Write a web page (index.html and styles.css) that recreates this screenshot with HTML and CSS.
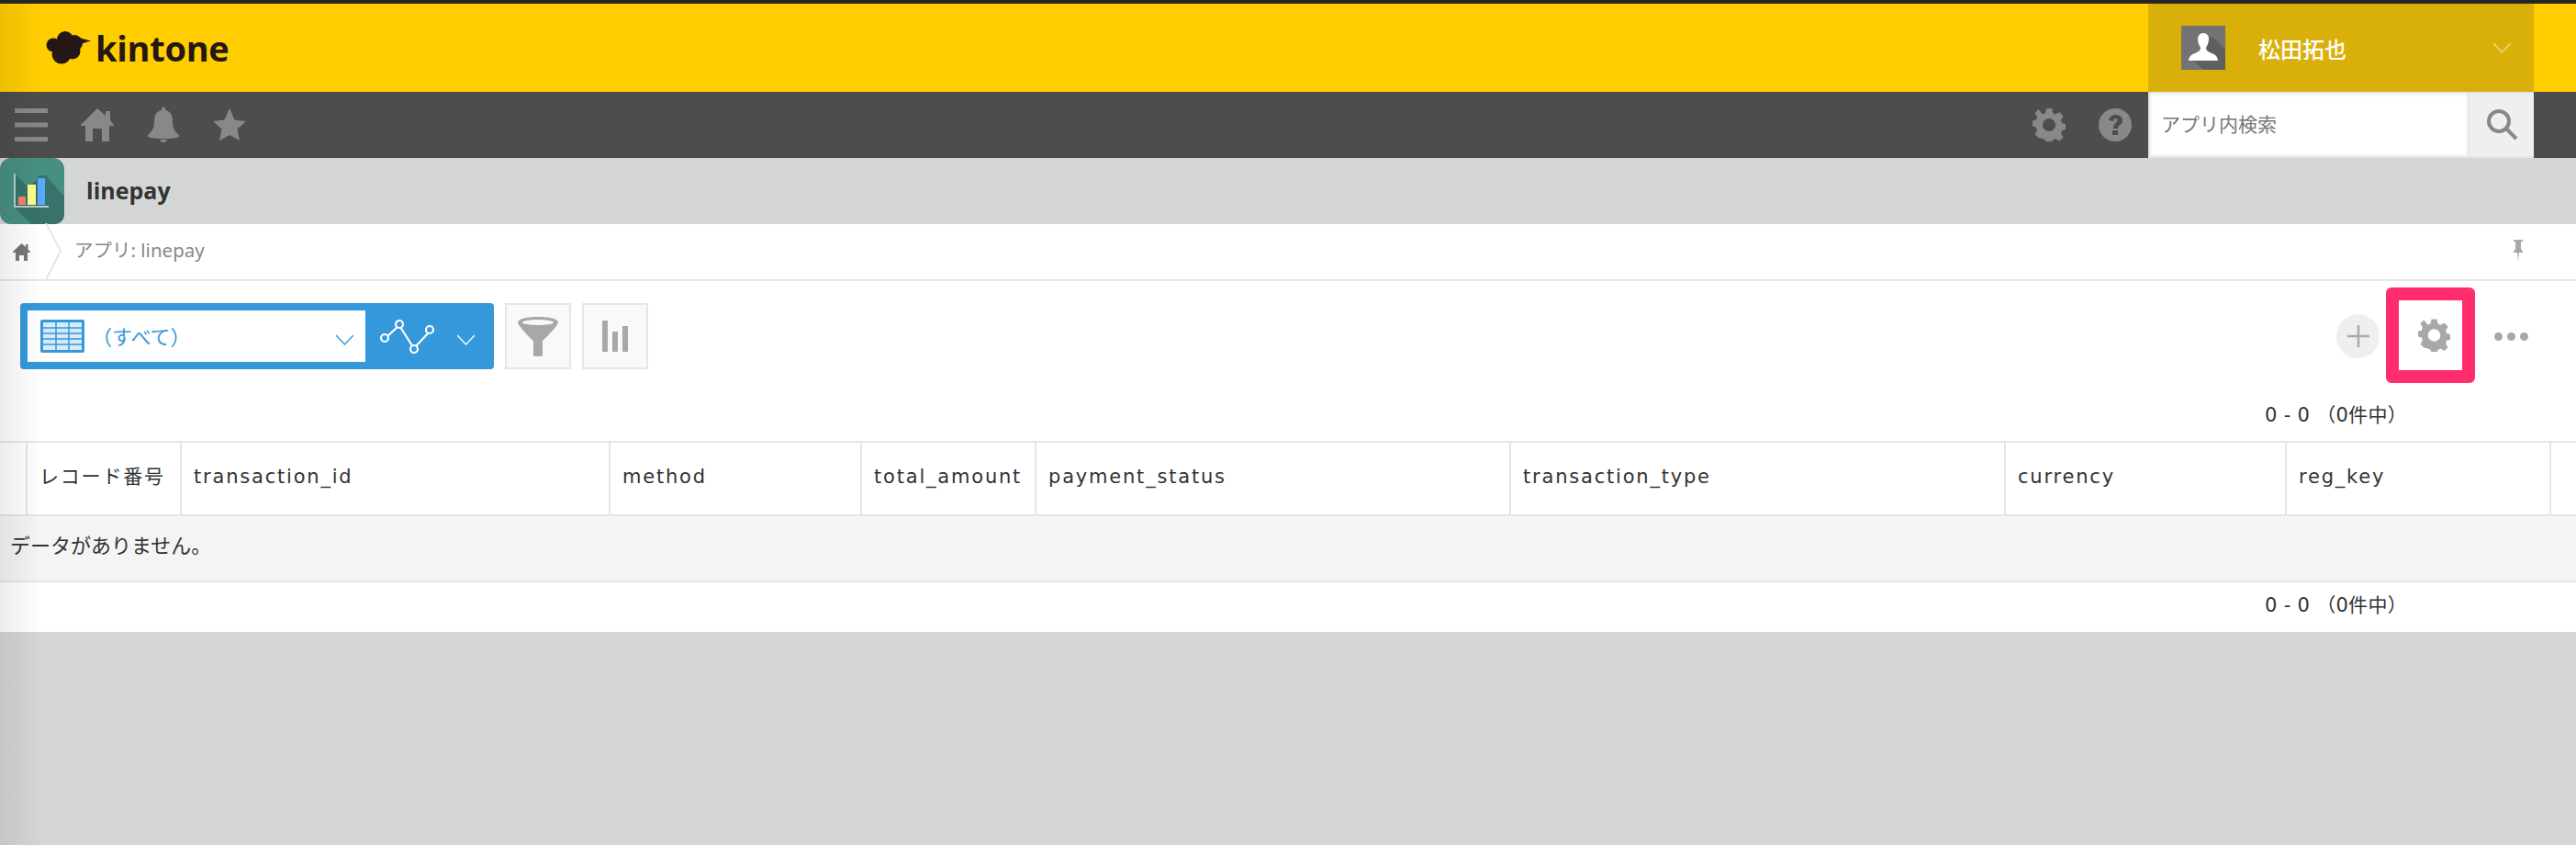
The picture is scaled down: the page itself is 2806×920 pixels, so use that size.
FILE: index.html
```html
<!DOCTYPE html>
<html lang="ja">
<head>
<meta charset="utf-8">
<title>linepay</title>
<link rel="stylesheet" href="styles.css">
</head>
<body>
<div class="page">
  <header class="topbar">
    <div class="logo">
      <svg class="logo-cloud" viewBox="0 0 50 36"><circle cx="8" cy="15" r="7.500"/><circle cx="21" cy="9" r="9"/><circle cx="31" cy="13" r="9"/><circle cx="29" cy="22" r="8.500"/><circle cx="17" cy="25" r="10.500"/><path d="M32 6l17 4.500L34 15z"/></svg>
      <span class="logo-text">kintone</span>
    </div>
    <div class="user">
      <svg class="avatar" viewBox="0 0 48 48"><rect width="48" height="48" fill="#737373"/><path d="M14 38l10 10h24V26L33 11z" fill="#5f5f5f"/><path d="M24 8c4 0 6 3 6 7 0 4-2 7-3 9 0 3 2 4 6 6 3 1 6 2 7 8H8c1-6 4-7 7-8 4-2 6-3 6-6-1-2-3-5-3-9 0-4 2-7 6-7z" fill="#fff"/></svg>
      <span class="user-name">松田拓也</span>
      <svg class="chev chev-user" viewBox="0 0 19 12"><path d="M0 1l9.500 10L19 1"/></svg>
    </div>
  </header>
  <nav class="navbar">
    <div class="nav-left">
      <svg class="nav-icon burger" viewBox="0 0 36 36"><path d="M0 0h36v5H0zM0 15.500h36v5H0zM0 31h36v5H0z"/></svg>
      <svg class="nav-icon home" viewBox="0 0 36 36"><path d="M18 0l9 8V3h5v10l4 5v1h-5v17H23V22H13v14H5V19H0v-1z"/></svg>
      <svg class="nav-icon bell" viewBox="0 0 34 38"><path d="M15 0h4v3c6 1 8 6 8 12 0 7 2 11 7 15v2c-5 2-11 2-17 2S5 34 0 32v-2c5-4 7-8 7-15C7 9 9 4 15 3zM13 35h8c-1 2-2 3-4 3s-3-1-4-3z"/></svg>
      <svg class="nav-icon star" viewBox="0 0 36 36"><path d="M18 0l5.500 12.500L36 14l-9.500 8.500L29 35l-11-6-11 6 2.500-12.500L0 14l12.500-1.500z"/></svg>
    </div>
    <div class="nav-right">
      <svg class="nav-icon gear-nav" viewBox="0 0 36 36"><path fill-rule="evenodd" d="M15 0h6l1 5 3 1.500L29.500 4l4 4.500-2.500 4 1 3.500 4 1v6l-4 1-1 3.500 2.500 4-4 4-4.500-2.500-3 1.500-1 5h-6l-1-5-3-1.500L6.500 32l-4-4 2.500-4L4 20.500 0 19.500v-6l4-1 1-3.500-2.500-4 4-4L11 6.500l3-1.500zM18 11a7 7 0 100 14 7 7 0 000-14z"/></svg>
      <svg class="nav-icon help" viewBox="0 0 36 36"><circle cx="18" cy="18" r="18"/><path fill="#4d4d4d" d="M11 13c1-4 4-6 7-6 4 0 8 2 8 6 0 3-2 5-4 6-1 .8-1 2-1 3h-5c0-3 .5-4 2.500-6 1-1 2-1.500 2-3 0-1-.5-2-2-2s-2 1-2.500 3zM15 24h6v5h-6z"/></svg>
      <div class="search">
        <div class="search-input">アプリ内検索</div>
        <div class="search-btn">
          <svg class="search-icon" viewBox="0 0 35 34"><circle cx="14" cy="13" r="11"/><path d="M22 21l11 11"/></svg>
        </div>
      </div>
    </div>
  </nav>
  <div class="appbar">
    <svg class="app-icon" viewBox="0 0 70 72">
      <rect width="70" height="72" rx="12" fill="#478f80"/>
      <path d="M16 17l14 14 9-6 3-6h8l20 23v20a10 10 0 01-10 10H34L16 54z" fill="#37736a"/>
      <rect x="20" y="42" width="8" height="9" fill="#fb7f68"/>
      <rect x="30" y="29" width="9" height="22" fill="#fbfd8b"/>
      <rect x="41" y="22" width="8" height="29" fill="#5aa9fa"/>
      <path d="M16 17v36h37" fill="none" stroke="#dfe9e7" stroke-width="1.500"/>
    </svg>
    <div class="app-title">linepay</div>
  </div>
  <div class="breadcrumb">
    <div class="crumb-home">
      <svg class="crumb-home-icon" viewBox="0 0 19 19"><path d="M9.500 0l4.500 4V1h2.500v5.500L19 9v1h-3v9h-4v-6H7v6H3v-9H0V9z"/></svg>
      <svg class="crumb-arrow" viewBox="0 0 20 62"><path d="M2 0l16 30L2 62"/></svg>
    </div>
    <div class="crumb-text">アプリ: linepay</div>
    <svg class="pin" viewBox="0 0 12 24"><path d="M1 0h10v2H9v8l2 3v1H7l-1 10-1-10H1v-1l2-3V2H1z"/></svg>
  </div>
  <div class="content">
    <div class="toolbar">
      <div class="view-box">
        <div class="view-select">
          <svg class="table-icon" viewBox="0 0 48 36">
            <rect width="48" height="36" rx="2" fill="#3498db"/>
            <path d="M3 3h42v30H3z" fill="#d6eaf8"/>
            <path d="M3 9h42M3 15h42M3 21h42M3 27h42M17 3v30M31 3v30" stroke="#3498db" stroke-width="1.500" fill="none"/>
          </svg>
          <span class="view-name">（すべて）</span>
          <svg class="chev chev-blue" viewBox="0 0 19 12"><path d="M0 1l9.500 10L19 1"/></svg>
        </div>
        <svg class="graph-icon" viewBox="0 0 60 37"><path d="M6 20L21 6M22 8l14 22M38 30L54 13"/><circle cx="5" cy="20" r="4"/><circle cx="21" cy="5" r="4"/><circle cx="37" cy="32" r="4"/><circle cx="54" cy="11" r="4"/></svg>
        <svg class="chev chev-white" viewBox="0 0 19 12"><path d="M0 1l9.500 10L19 1"/></svg>
      </div>
      <div class="tool-btn">
        <svg class="funnel" viewBox="0 0 44 43"><path d="M0 6C0 2 10 0 22 0s22 2 22 6c0 3-13 17-17 20v15c0 2-1 2-5 2s-5 0-5-2V26C13 23 0 9 0 6z" fill="#a8a8a8"/><ellipse cx="22" cy="6" rx="17" ry="3" fill="#f7f9fa"/></svg>
      </div>
      <div class="tool-btn">
        <svg class="bars" viewBox="0 0 28 34"><path d="M0 0h6v34H0zM11 12h6v22h-6zM22 6h6v28h-6z"/></svg>
      </div>
      <div class="tool-spacer"></div>
      <div class="add-btn">
        <svg class="plus" viewBox="0 0 24 24"><path d="M12 0v24M0 12h24"/></svg>
      </div>
      <div class="settings-frame">
        <svg class="gear-tool" viewBox="0 0 36 36"><path fill-rule="evenodd" d="M15 0h6l1 5 3 1.500L29.500 4l4 4.500-2.500 4 1 3.500 4 1v6l-4 1-1 3.500 2.500 4-4 4-4.500-2.500-3 1.500-1 5h-6l-1-5-3-1.500L6.500 32l-4-4 2.500-4L4 20.500 0 19.500v-6l4-1 1-3.500-2.500-4 4-4L11 6.500l3-1.500zM18 11a7 7 0 100 14 7 7 0 000-14z"/></svg>
      </div>
      <div class="dots"><i></i><i></i><i></i></div>
    </div>
    <div class="pager pager-top">0 - 0 （0件中）</div>
    <div class="table-head">
      <div class="th"></div>
      <div class="th">レコード番号</div>
      <div class="th">transaction_id</div>
      <div class="th">method</div>
      <div class="th">total_amount</div>
      <div class="th">payment_status</div>
      <div class="th">transaction_type</div>
      <div class="th">currency</div>
      <div class="th">reg_key</div>
      <div class="th th-last"></div>
    </div>
    <div class="empty-row">データがありません。</div>
    <div class="pager pager-bottom">0 - 0 （0件中）</div>
  </div>
  <div class="rest"></div>
  <div class="edge-shade"></div>
</div>
</body>
</html>
```
FILE: styles.css
```css
* { box-sizing: border-box; }
html, body { margin: 0; padding: 0; }
body {
  width: 2806px;
  height: 920px;
  overflow: hidden;
  background: #d4d6d5;
  font-family: "DejaVu Sans", "Noto Sans CJK JP", sans-serif;
  color: #333;
}
.page { position: relative; display: flex; flex-direction: column; height: 920px; }
.edge-shade {
  position: absolute;
  left: 0; top: 4px; bottom: 0;
  width: 46px;
  background: linear-gradient(to right, rgba(0,0,0,.07), rgba(0,0,0,0));
  pointer-events: none;
}

.topbar {
  height: 100px;
  border-top: 4px solid #262626;
  background: #ffcd00;
  display: flex;
  justify-content: space-between;
  padding-right: 46px;
}
.logo { display: flex; align-items: center; padding-left: 50px; padding-top: 6px; }
.logo-cloud { width: 50px; height: 36px; fill: #231815; margin-right: 4px; margin-top: -6px; }
.logo-text {
  font-family: "Open Sans", sans-serif;
  font-weight: 700;
  font-size: 38px;
  color: #231815;
  line-height: 1;
  margin-top: -6px;
  letter-spacing: -.3px;
}
.user {
  width: 420px;
  background: #d9b00a;
  display: flex;
  align-items: center;
  padding-left: 36px;
}
.avatar { width: 48px; height: 48px; }
.user-name {
  font-family: "Noto Sans CJK JP", sans-serif;
  font-size: 24px;
  font-weight: 500;
  color: #fff;
  margin-left: 36px;
  flex: 1;
}
.chev { fill: none; stroke-width: 1.400; }
.chev-user { width: 19px; height: 12px; stroke: #f0dc8c; margin-right: 25px; }

.navbar {
  height: 72px;
  background: #4d4d4d;
  display: flex;
  justify-content: space-between;
  padding-right: 46px;
}
.nav-left { display: flex; align-items: center; padding-left: 16px; }
.nav-icon { fill: #888; display: block; }
.burger { width: 36px; height: 36px; }
.home { width: 36px; height: 36px; margin-left: 36px; }
.bell { width: 34px; height: 38px; margin-left: 37px; }
.star { width: 36px; height: 36px; margin-left: 37px; }
.nav-right { display: flex; align-items: center; }
.gear-nav { width: 36px; height: 36px; }
.help { width: 36px; height: 36px; margin-left: 36px; margin-right: 18px; }
.search { display: flex; width: 420px; height: 72px; background: #e3e7e6; padding: 2px 0 2px 2px; }
.search-input {
  width: 346px;
  background: #fff;
  box-shadow: inset 0 0 4px rgba(0,0,0,.1);
  font-family: "Noto Sans CJK JP", sans-serif;
  font-size: 21px;
  color: #777;
  display: flex;
  align-items: center;
  padding-left: 12px;
  padding-bottom: 4px;
}
.search-btn {
  margin-left: 2px;
  flex: 1;
  background: #efefef;
  display: flex;
  align-items: center;
  justify-content: center;
}
.search-icon { width: 35px; height: 34px; fill: none; stroke: #888; stroke-width: 4; }

.appbar { height: 72px; background: #d4d6d5; display: flex; align-items: center; }
.app-icon { width: 70px; height: 72px; }
.app-title {
  font-family: "Open Sans", sans-serif;
  font-weight: 700;
  font-size: 25px;
  color: #333;
  margin-left: 24px;
  margin-top: -3px;
}

.breadcrumb {
  position: relative;
  height: 62px;
  background: #fff;
  border-bottom: 2px solid #e3e7e6;
  display: flex;
  align-items: center;
}
.crumb-home { width: 81px; height: 60px; display: flex; align-items: center; padding-left: 14px; }
.crumb-home-icon { width: 19px; height: 19px; fill: #777; }
.crumb-arrow { width: 20px; height: 62px; fill: none; stroke: #e3e7e6; stroke-width: 2; margin-left: 15px; }
.crumb-text {
  font-family: "Noto Sans", "Noto Sans CJK JP", sans-serif;
  font-size: 20.500px;
  color: #888;
  flex: 1;
  padding-bottom: 6px;
}
.pin { width: 12px; height: 24px; fill: #a8a8a8; margin-right: 57px; margin-bottom: 2px; }

.content { background: #fff; height: 382px; display: flex; flex-direction: column; }
.toolbar { height: 110px; padding: 7px 52px 0 22px; display: flex; align-items: flex-start; }
.view-box {
  width: 516px;
  height: 72px;
  margin-top: 17px;
  background: #3498db;
  border-radius: 4px;
  padding-left: 8px;
  display: flex;
  align-items: center;
}
.view-select {
  width: 368px;
  height: 56px;
  background: #fff;
  display: flex;
  align-items: center;
  padding-left: 14px;
}
.table-icon { width: 48px; height: 36px; flex: none; }
.view-name {
  font-family: "Noto Sans CJK JP", sans-serif;
  font-size: 22px;
  color: #3498db;
  margin-left: 8px;
  margin-top: -2px;
  flex: 1;
}
.chev-blue, .chev-white { width: 19px; height: 12px; }
.chev-blue { stroke: #3498db; margin-right: 13px; margin-top: 8px; }
.chev-white { stroke: #fff; margin-left: 24px; margin-top: 8px; }
.graph-icon { width: 60px; height: 37px; margin-left: 16px; fill: #3498db; stroke: #fff; stroke-width: 2.200; }
.tool-btn {
  width: 72px;
  height: 72px;
  margin-top: 17px;
  margin-left: 12px;
  background: #f7f9fa;
  border: 2px solid #e3e7e6;
  display: flex;
  align-items: center;
  justify-content: center;
}
.funnel { width: 44px; height: 43px; }
.bars { width: 28px; height: 34px; fill: #a8a8a8; }
.tool-spacer { flex: 1; }
.add-btn {
  width: 47px;
  height: 48px;
  margin-top: 29px;
  border-radius: 50%;
  background: #efefef;
  display: flex;
  align-items: center;
  justify-content: center;
}
.plus { width: 24px; height: 24px; fill: none; stroke: #aaa; stroke-width: 2.500; }
.settings-frame {
  width: 97px;
  height: 104px;
  margin-left: 7px;
  border: 14px solid #ff2d6b;
  border-radius: 6px;
  display: flex;
  align-items: center;
  justify-content: center;
}
.gear-tool { width: 35px; height: 36px; fill: #a8a8a8; margin-left: 8px; }
.dots { display: flex; gap: 5px; margin-left: 21px; margin-top: 49px; }
.dots i { width: 9px; height: 9px; border-radius: 50%; background: #a8a8a8; display: block; }

.pager {
  font-size: 21px;
  letter-spacing: .3px;
  color: #333;
  text-align: right;
  padding-right: 184px;
  font-family: "DejaVu Sans", "Noto Sans CJK JP", sans-serif;
}
.pager-top { height: 64px; padding-top: 21px; line-height: 30px; }
.table-head {
  display: grid;
  grid-template-columns: 30px 168px 467px 274px 190px 517px 539px 306px 288px 27px;
  height: 82px;
  border-top: 2px solid #e3e7e6;
  border-bottom: 2px solid #e3e7e6;
}
.th {
  border-right: 2px solid #e3e7e6;
  font-size: 21px;
  letter-spacing: 1.800px;
  color: #333;
  padding-left: 13px;
  line-height: 74px;
  white-space: nowrap;
}
.th-last { border-right: 0; }
.empty-row {
  height: 72px;
  background: #f4f4f4;
  border-bottom: 2px solid #e3e7e6;
  font-family: "Noto Sans CJK JP", sans-serif;
  font-size: 22px;
  color: #333;
  padding-left: 11px;
  line-height: 60px;
}
.pager-bottom { height: 54px; line-height: 50px; }
.rest { flex: 1; background: #d4d6d5; }
```
